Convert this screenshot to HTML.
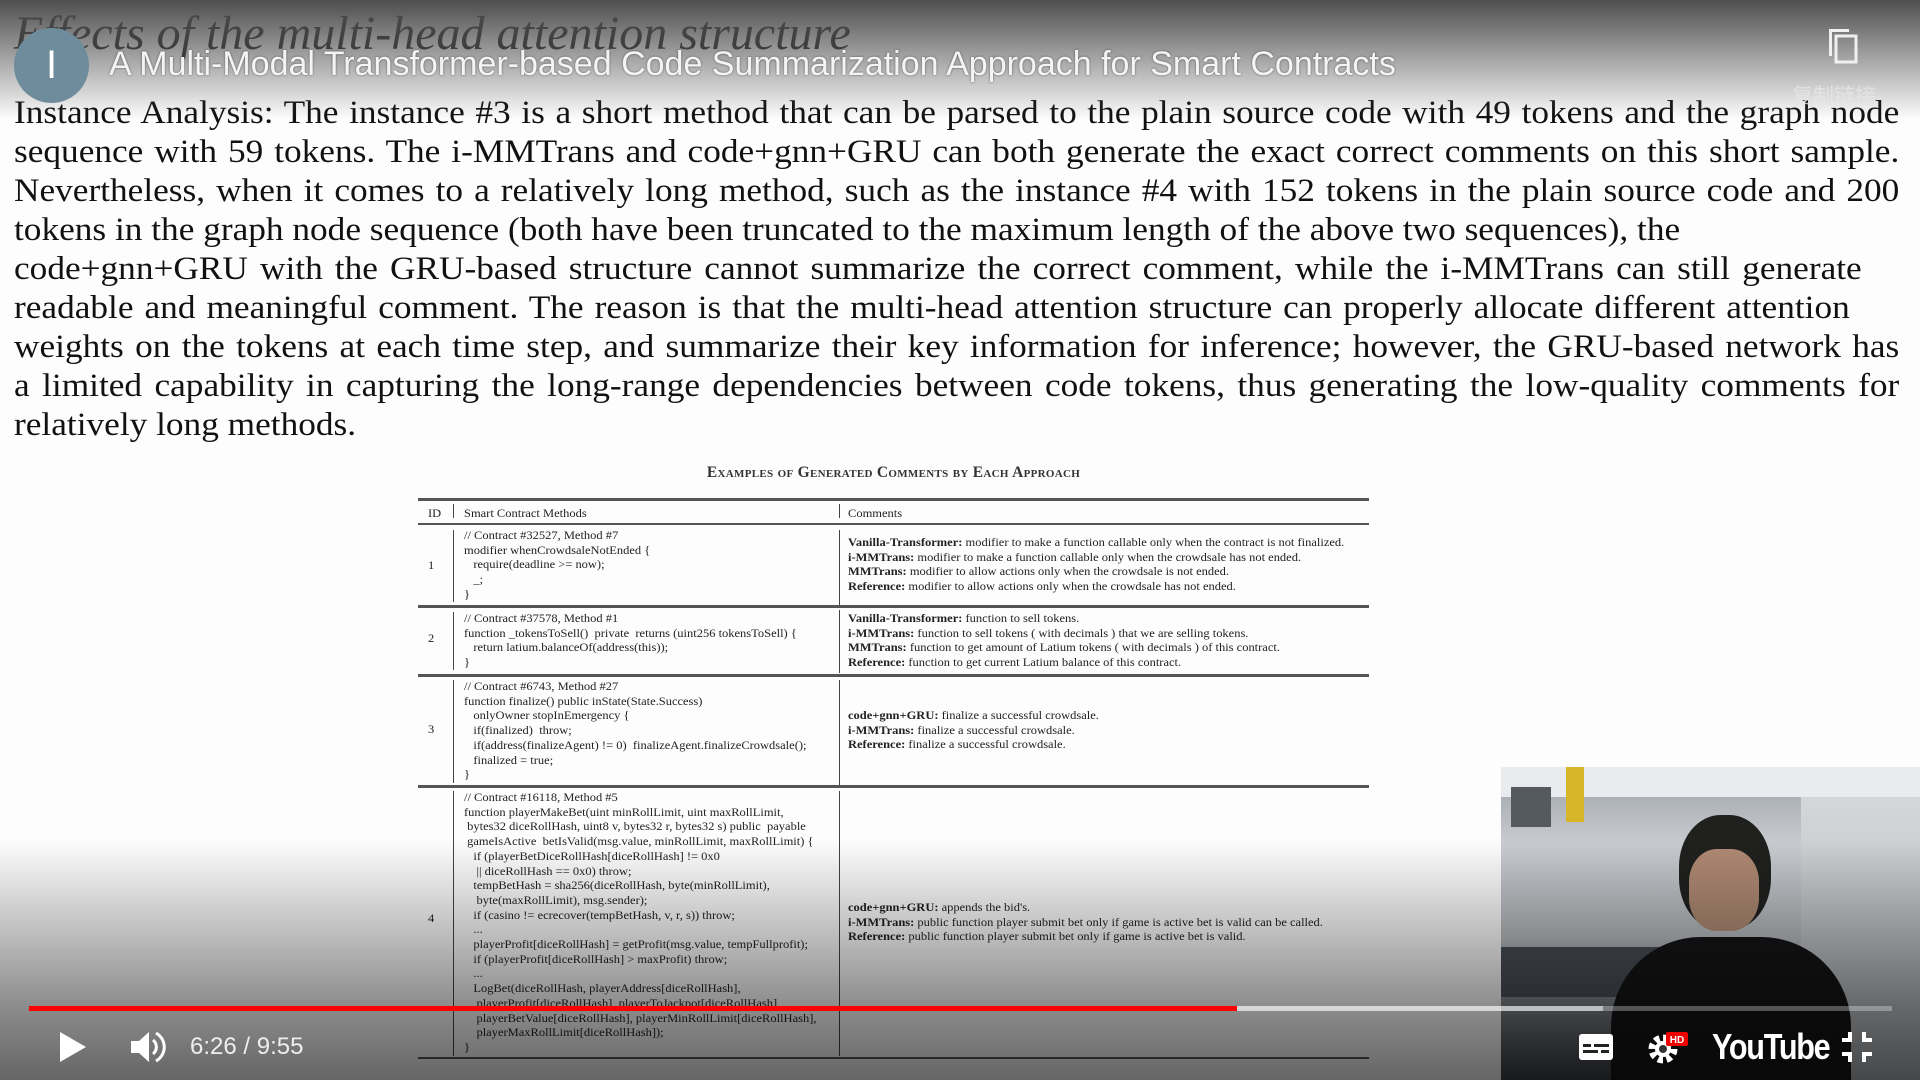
<!DOCTYPE html>
<html><head><meta charset="utf-8"><style>
*{margin:0;padding:0;box-sizing:border-box}
body{width:1920px;height:1080px;overflow:hidden;background:#fdfdfd;position:relative;font-family:"Liberation Serif",serif;color:#111}
.abs{position:absolute}
#slideTitle{left:14px;top:6px;font-style:italic;font-size:48px;color:#222;white-space:nowrap}
#para{left:14px;top:94px;width:1736px;font-size:32.5px;line-height:39px;color:#111;transform:scaleX(1.086);transform-origin:left top}
#para div{text-align:justify;text-align-last:justify;white-space:nowrap;height:39px}
#para div.l{text-align-last:left}
#topshade{left:0;top:0;width:1920px;height:120px;background:linear-gradient(#4e4e4e,rgba(80,80,80,.55) 45%,rgba(120,120,120,0))}
#botshade{left:0;top:840px;width:1920px;height:240px;background:linear-gradient(rgba(0,0,0,0),rgba(0,0,0,.45) 70%,rgba(0,0,0,.6))}
#avatar{left:14px;top:28px;width:75px;height:75px;border-radius:50%;background:#6f8c9c;color:#fff;font:40px "Liberation Sans",sans-serif;text-align:center;line-height:75px}
#vtitle{left:109px;top:45px;font:34px "Liberation Sans",sans-serif;color:#f4f4f4;white-space:nowrap;text-shadow:0 0 2px rgba(0,0,0,.5)}
#copytxt{left:1792px;top:80px;font:21px "Liberation Sans","Noto Sans CJK SC",sans-serif;color:rgba(230,230,230,.8)}
#cap{left:418px;width:951px;top:464px;text-align:center;font-size:15.5px;font-variant:small-caps;font-weight:bold;color:#333;letter-spacing:.3px}
.tbl{left:418px;top:498px;width:951px;font-size:12px;line-height:14.7px;color:#222}
.rule{position:absolute;left:0;width:951px;background:#555}
.vl{position:absolute;width:1px;background:#444}
.cell{position:absolute;white-space:nowrap;transform:scaleX(1.04);transform-origin:left top}
b{font-weight:bold}
#cam{left:1501px;top:767px;width:419px;height:313px;background:linear-gradient(180deg,#9aa0a6,#c9ccd0 25%,#b7bcc0 55%,#3c4046 100%);overflow:hidden}
#prog{left:29px;top:1006px;width:1863px;height:5px;background:rgba(255,255,255,.3)}
#time{left:190px;top:1033px;font:24px "Liberation Sans",sans-serif;color:#eee}
</style></head><body>
<div class="abs" id="slideTitle">Effects of the multi-head attention structure</div>
<div class="abs" id="para">
<div>Instance Analysis: The instance #3 is a short method that can be parsed to the plain source code with 49 tokens and the graph node</div>
<div>sequence with 59 tokens. The i-MMTrans and code+gnn+GRU can both generate the exact correct comments on this short sample.</div>
<div>Nevertheless, when it comes to a relatively long method, such as the instance #4 with 152 tokens in the plain source code and 200</div>
<div class="l">tokens in the graph node sequence (both have been truncated to the maximum length of the above two sequences), the</div>
<div class="l" style="word-spacing:3px">code+gnn+GRU with the GRU-based structure cannot summarize the correct comment, while the i-MMTrans can still generate</div>
<div class="l" style="word-spacing:2px">readable and meaningful comment. The reason is that the multi-head attention structure can properly allocate different attention</div>
<div>weights on the tokens at each time step, and summarize their key information for inference; however, the GRU-based network has</div>
<div>a limited capability in capturing the long-range dependencies between code tokens, thus generating the low-quality comments for</div>
<div class="l">relatively long methods.</div>
</div>

<div class="abs" id="cap">Examples of Generated Comments by Each Approach</div>
<div class="abs tbl">
<div class="rule" style="top:0;height:3px"></div>
<div class="cell" style="left:10px;top:8px">ID</div>
<div class="cell" style="left:46px;top:8px">Smart Contract Methods</div>
<div class="cell" style="left:430px;top:8px">Comments</div>
<div class="rule" style="top:25px;height:2px"></div>
<div class="vl" style="left:35px;top:6px;height:14px"></div>
<div class="vl" style="left:421px;top:6px;height:14px"></div>
<div class="vl" style="left:35px;top:32px;height:72px"></div><div class="vl" style="left:421px;top:32px;height:75px"></div>
<div class="cell" style="left:10px;top:60px">1</div>
<div class="cell" style="left:46px;top:30px">// Contract #32527, Method #7<br>modifier whenCrowdsaleNotEnded {<br>&nbsp;&nbsp;&nbsp;require(deadline &gt;= now);<br>&nbsp;&nbsp;&nbsp;_;<br>}</div>
<div class="cell" style="left:430px;top:37px"><b>Vanilla-Transformer:</b> modifier to make a function callable only when the contract is not finalized.<br><b>i-MMTrans:</b> modifier to make a function callable only when the crowdsale has not ended.<br><b>MMTrans:</b> modifier to allow actions only when the crowdsale is not ended.<br><b>Reference:</b> modifier to allow actions only when the crowdsale has not ended.</div>
<div class="rule" style="top:107px;height:3px"></div>
<div class="vl" style="left:35px;top:114px;height:58px"></div><div class="vl" style="left:421px;top:112px;height:63px"></div>
<div class="cell" style="left:10px;top:133px">2</div>
<div class="cell" style="left:46px;top:113px">// Contract #37578, Method #1<br>function _tokensToSell()&nbsp; private&nbsp; returns (uint256 tokensToSell) {<br>&nbsp;&nbsp;&nbsp;return latium.balanceOf(address(this));<br>}</div>
<div class="cell" style="left:430px;top:113px"><b>Vanilla-Transformer:</b> function to sell tokens.<br><b>i-MMTrans:</b> function to sell tokens ( with decimals ) that we are selling tokens.<br><b>MMTrans:</b> function to get amount of Latium tokens ( with decimals ) of this contract.<br><b>Reference:</b> function to get current Latium balance of this contract.</div>
<div class="rule" style="top:176px;height:3px"></div>
<div class="vl" style="left:35px;top:182px;height:103px"></div><div class="vl" style="left:421px;top:182px;height:106px"></div>
<div class="cell" style="left:10px;top:224px">3</div>
<div class="cell" style="left:46px;top:181px">// Contract #6743, Method #27<br>function finalize() public inState(State.Success)<br>&nbsp;&nbsp;&nbsp;onlyOwner stopInEmergency {<br>&nbsp;&nbsp;&nbsp;if(finalized)&nbsp; throw;<br>&nbsp;&nbsp;&nbsp;if(address(finalizeAgent) != 0)&nbsp; finalizeAgent.finalizeCrowdsale();<br>&nbsp;&nbsp;&nbsp;finalized = true;<br>}</div>
<div class="cell" style="left:430px;top:210px"><b>code+gnn+GRU:</b> finalize a successful crowdsale.<br><b>i-MMTrans:</b> finalize a successful crowdsale.<br><b>Reference:</b> finalize a successful crowdsale.</div>
<div class="rule" style="top:287px;height:3px"></div>
<div class="vl" style="left:35px;top:293px;height:265px"></div><div class="vl" style="left:421px;top:293px;height:265px"></div>
<div class="cell" style="left:10px;top:413px">4</div>
<div class="cell" style="left:46px;top:292px">// Contract #16118, Method #5<br>function playerMakeBet(uint minRollLimit, uint maxRollLimit,<br>&nbsp;bytes32 diceRollHash, uint8 v, bytes32 r, bytes32 s) public&nbsp; payable<br>&nbsp;gameIsActive&nbsp; betIsValid(msg.value, minRollLimit, maxRollLimit) {<br>&nbsp;&nbsp;&nbsp;if (playerBetDiceRollHash[diceRollHash] != 0x0<br>&nbsp;&nbsp;&nbsp;&nbsp;|| diceRollHash == 0x0) throw;<br>&nbsp;&nbsp;&nbsp;tempBetHash = sha256(diceRollHash, byte(minRollLimit),<br>&nbsp;&nbsp;&nbsp;&nbsp;byte(maxRollLimit), msg.sender);<br>&nbsp;&nbsp;&nbsp;if (casino != ecrecover(tempBetHash, v, r, s)) throw;<br>&nbsp;&nbsp;&nbsp;...<br>&nbsp;&nbsp;&nbsp;playerProfit[diceRollHash] = getProfit(msg.value, tempFullprofit);<br>&nbsp;&nbsp;&nbsp;if (playerProfit[diceRollHash] &gt; maxProfit) throw;<br>&nbsp;&nbsp;&nbsp;...<br>&nbsp;&nbsp;&nbsp;LogBet(diceRollHash, playerAddress[diceRollHash],<br>&nbsp;&nbsp;&nbsp;&nbsp;playerProfit[diceRollHash], playerToJackpot[diceRollHash],<br>&nbsp;&nbsp;&nbsp;&nbsp;playerBetValue[diceRollHash], playerMinRollLimit[diceRollHash],<br>&nbsp;&nbsp;&nbsp;&nbsp;playerMaxRollLimit[diceRollHash]);<br>}</div>
<div class="cell" style="left:430px;top:402px"><b>code+gnn+GRU:</b> appends the bid's.<br><b>i-MMTrans:</b> public function player submit bet only if game is active bet is valid can be called.<br><b>Reference:</b> public function player submit bet only if game is active bet is valid.</div>
<div class="rule" style="top:559px;height:2px"></div>
</div>

<div class="abs" id="cam">
 <div class="abs" style="left:0;top:0;width:419px;height:30px;background:#e9ebee"></div>
 <div class="abs" style="left:65px;top:0;width:18px;height:55px;background:#d8b62a"></div>
 <div class="abs" style="left:10px;top:20px;width:40px;height:40px;background:#555a60"></div>
 <div class="abs" style="left:0;top:180px;width:200px;height:50px;background:#4a5058"></div>
 <div class="abs" style="left:300px;top:30px;width:119px;height:283px;background:linear-gradient(#d4d6d8,#aeb2b6)"></div>
 <div class="abs" style="left:178px;top:48px;width:92px;height:115px;border-radius:45%;background:#20201f"></div>
 <div class="abs" style="left:188px;top:82px;width:70px;height:82px;border-radius:40%;background:#b08a74"></div>
 <div class="abs" style="left:110px;top:170px;width:240px;height:160px;border-radius:90px 90px 0 0;background:#151517"></div>
</div>

<div class="abs" id="topshade"></div>
<div class="abs" id="botshade"></div>
<div class="abs" id="avatar">I</div>
<div class="abs" id="vtitle">A Multi-Modal Transformer-based Code Summarization Approach for Smart Contracts</div>
<svg class="abs" style="left:1825px;top:25px" width="36" height="40" viewBox="0 0 36 40"><path d="M4 4h20v3H7v24H4z" fill="#f0f0f0"/><rect x="11" y="11" width="20" height="26" fill="none" stroke="#f0f0f0" stroke-width="3"/></svg>
<div class="abs" id="copytxt">复制链接</div>

<div class="abs" id="prog"><div class="abs" style="left:0;top:0;width:1574px;height:5px;background:rgba(255,255,255,.5)"></div><div class="abs" style="left:0;top:0;width:1208px;height:5px;background:#f00"></div></div>
<svg class="abs" style="left:58px;top:1030px" width="30" height="34"><path d="M2 2L28 17L2 32z" fill="#fff"/></svg>
<svg class="abs" style="left:128px;top:1028px" width="40" height="38" viewBox="0 0 40 38"><path d="M3 13h8l10-9v30l-10-9H3z" fill="#fff"/><path d="M25 12a9 9 0 0 1 0 14" stroke="#fff" stroke-width="3" fill="none"/><path d="M28 5a16 16 0 0 1 0 28" stroke="#fff" stroke-width="3" fill="none"/></svg>
<div class="abs" id="time">6:26 / 9:55</div>
<svg class="abs" style="left:1578px;top:1033px" width="36" height="28"><rect x="1" y="1" width="34" height="26" rx="3" fill="#fff"/><rect x="5" y="11" width="8" height="3" fill="#222"/><rect x="16" y="11" width="15" height="3" fill="#222"/><rect x="5" y="17" width="15" height="3" fill="#222"/><rect x="23" y="17" width="8" height="3" fill="#222"/></svg>
<svg class="abs" style="left:1645px;top:1028px" width="46" height="38" viewBox="0 0 46 38"><circle cx="18" cy="21" r="11" fill="none" stroke="#fff" stroke-width="7" stroke-dasharray="5 3.6"/><circle cx="18" cy="21" r="8" fill="#fff"/><circle cx="18" cy="21" r="4" fill="#333"/><rect x="21" y="4" width="22" height="14" rx="2" fill="#e00"/><text x="32" y="15" font-family="Liberation Sans" font-size="10" font-weight="bold" fill="#fff" text-anchor="middle">HD</text></svg>
<div class="abs" style="left:1712px;top:1026px;font:bold 36px 'Liberation Sans',sans-serif;color:#fff;letter-spacing:-1.5px;transform:scaleX(.85);transform-origin:left">YouTube</div>
<svg class="abs" style="left:1840px;top:1030px" width="34" height="34"><path d="M10 2v8H2M24 2v8h8M10 32v-8H2M24 32v-8h8" stroke="#fff" stroke-width="4" fill="none"/></svg>
</body></html>
